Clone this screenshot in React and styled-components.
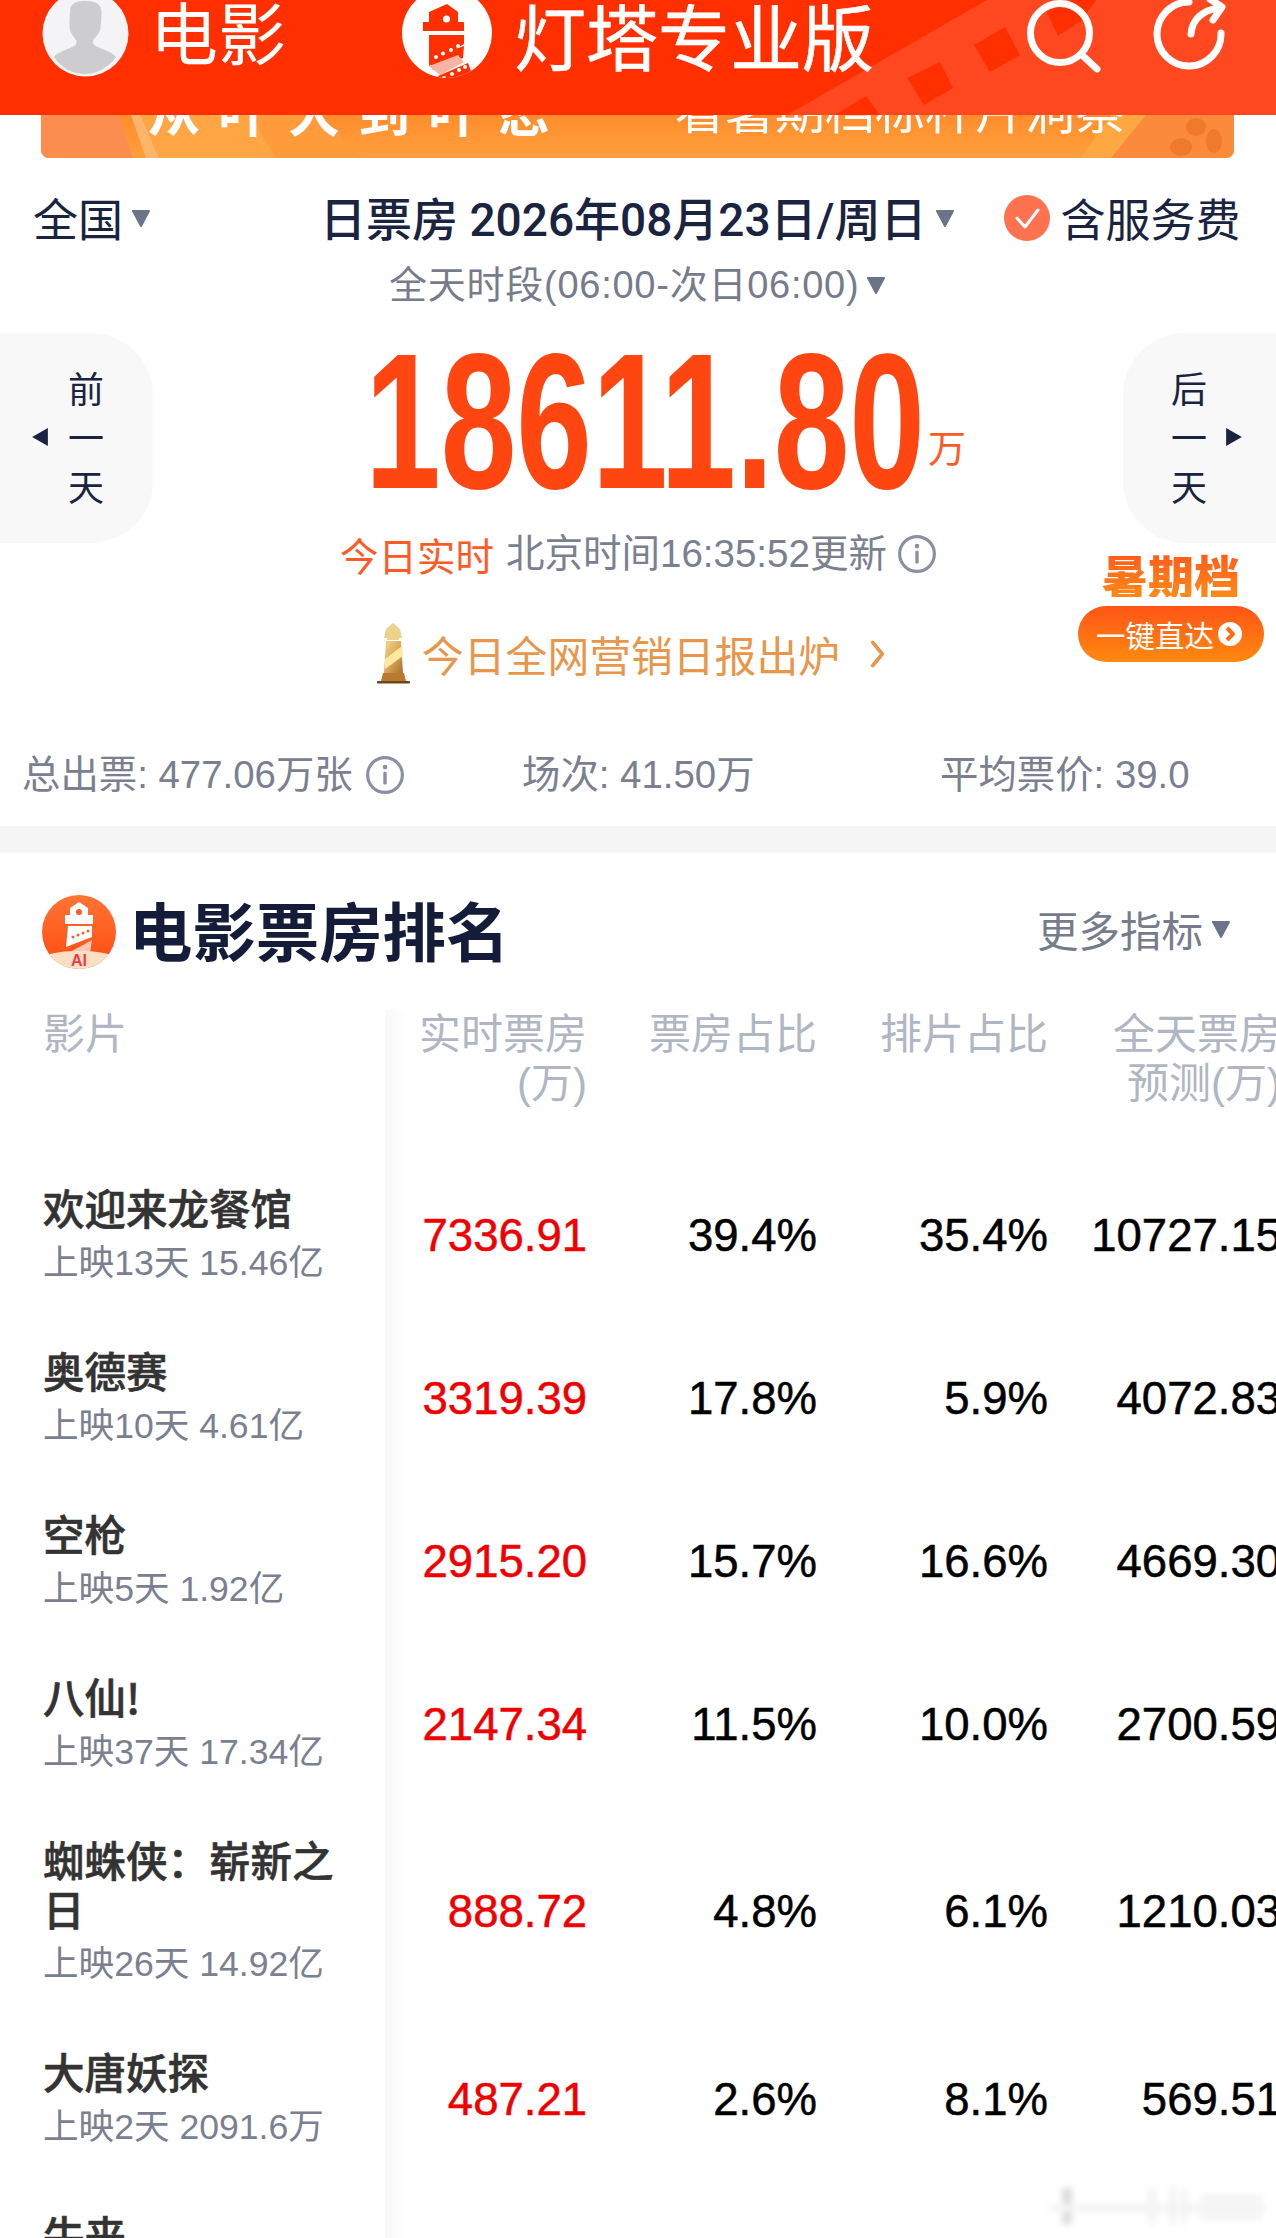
import React from "react";
import styled, { createGlobalStyle } from "styled-components";

const CJK = '"Noto Sans CJK SC"';
const Global = createGlobalStyle`
  html, body { margin: 0; padding: 0; background: #fff; }
  * { box-sizing: border-box; }
  body { font-family: "Liberation Sans", ${CJK}, sans-serif; }
`;

const Page = styled.div`
  position: relative; width: 1276px; height: 2238px; overflow: hidden; background: #fff;
`;

/* ---------- header ---------- */
const Header = styled.header`
  position: relative; height: 115px; padding: 0 0 49px 42px; display: flex; align-items: center;
  background: #ff2f00; overflow: hidden; color: #fff;
`;
const HeaderDecor = styled.svg`
  position: absolute; left: 0; top: 0; width: 1276px; height: 115px;
`;
const Avatar = styled.svg`
  position: relative; flex: none; width: 87px; height: 87px;
`;
const HeaderTitle = styled.div`
  position: relative; flex: none; margin: -4px 0 0 21px; width: 136px; font-family: ${CJK}; font-size: 68px; line-height: 66px; white-space: nowrap;
`;
const HeaderLogo = styled.svg`
  position: relative; flex: none; margin-left: 116px; width: 90px; height: 90px;
`;
const BrandTitle = styled.div`
  position: relative; flex: none; margin: 2px 0 0 22px; font-family: ${CJK}; font-size: 72px; line-height: 72px; white-space: nowrap;
  -webkit-text-stroke: .6px #fff;
`;
const HeaderIcon = styled.svg`
  position: relative; flex: none; margin: 8px 0 0 ${(p) => p.$ml}px; width: 80px; height: 80px;
`;

/* ---------- banner ---------- */
const Banner = styled.div`
  position: relative; margin: 0 42px 0 41px; height: 43px; overflow: hidden; border-radius: 0 0 8px 8px;
  background: linear-gradient(180deg, #ff8c2c 0%, #ffa03c 100%);
  display: flex;
`;
const BannerDecor = styled.svg`
  position: absolute; left: 0; top: 0; width: 1193px; height: 43px;
`;
const BannerLead = styled.div`
  position: relative; margin: -30px 0 0 107px; width: 527px; font-family: ${CJK}; font-weight: 700; font-size: 52px; line-height: 50px;
  letter-spacing: 18px; color: #fff; white-space: nowrap;
`;
const BannerNote = styled.div`
  position: relative; font-family: ${CJK}; font-size: 50px; line-height: 50px; margin-top: -33px; color: #fff; white-space: nowrap;
`;

/* ---------- filters ---------- */
const FilterRow = styled.div`
  height: 50px; margin-top: 35px; padding-left: 33px; display: flex; align-items: center;
  color: #1a2340; white-space: nowrap;
`;
const FilterLabel = styled.span`
  font-family: ${CJK}; font-size: 45px; line-height: 50px;
`;
const DateLabel = styled.span`
  margin: 3px 0 0 ${(p) => p.$ml}px; font-family: Roboto, ${CJK}, sans-serif; font-weight: 500; font-size: 46px; line-height: 50px;
`;
const Caret = styled.svg`
  flex: none; width: 20px; height: 18px; margin-left: ${(p) => p.$ml ?? 8}px;
`;
const CheckMark = styled.svg`
  flex: none; width: 46px; height: 46px; margin-left: 49px;
`;
const ServiceLabel = styled(FilterLabel)`
  margin-left: 11px;
`;
const TimeRow = styled.div`
  height: 44px; margin-top: 20px; padding-left: 389px; display: flex; align-items: center; color: #767c8b;
  font-size: 38px; line-height: 44px; white-space: nowrap; letter-spacing: .75px;
`;

/* ---------- hero ---------- */
const Hero = styled.section`
  height: 210px; margin-top: 26px; display: flex; justify-content: space-between;
`;
const DayButton = styled.div`
  flex: none; width: 153px; background: #f8f8f9; display: flex; align-items: center; gap: ${(p) => p.$left ? "19px" : "18px"};
  padding-left: ${(p) => p.$left ? "31px" : "48px"}; padding-bottom: 3px;
  border-radius: ${(p) => p.$left ? "0 62px 62px 0" : "62px 0 0 62px"}; color: #1a2340;
`;
const DayArrow = styled.svg`
  flex: none; width: 18px; height: 22px;
`;
const DayText = styled.div`
  width: 36px; font-family: ${CJK}; font-size: 36px; line-height: 49px; text-align: center;
`;
const HeroCenter = styled.div`
  flex: none; width: 970px; display: flex; align-items: flex-start; padding: 13px 0 0 212px;
`;
const BigNumberBox = styled.div`
  flex: none; width: 555px; height: 150px;
`;
const BigNumber = styled.span`
  display: inline-block; transform: scaleX(.705); transform-origin: left top;
  font-size: 193px; line-height: 150px; font-weight: 700; color: #ff4510; white-space: nowrap;
`;
const Unit = styled.span`
  margin: 78px 0 0 8px; font-family: ${CJK}; font-size: 38px; line-height: 44px; color: #ff5a26;
`;

/* ---------- realtime ---------- */
const LiveRow = styled.div`
  height: 44px; margin-top: -11px; padding-left: 340px; display: flex; align-items: center;
  font-size: 38.5px; line-height: 44px; white-space: nowrap;
`;
const LiveTag = styled.span` color: #ff5a26; font-family: ${CJK}; `;
const LiveTime = styled.span` margin-left: 12px; color: #7b8090; `;
const InfoIcon = styled.svg`
  flex: none; width: 40px; height: 40px; margin-left: ${(p) => p.$ml}px;
`;
const MarketRow = styled.div`
  height: 62px; margin-top: 47px; padding-left: 375px; display: flex; align-items: center; white-space: nowrap;
`;
const Trophy = styled.svg`
  flex: none; width: 36px; height: 62px;
`;
const MarketText = styled.span`
  margin-left: 11px; font-family: ${CJK}; font-size: 41.8px; line-height: 50px; color: #e8964a;
`;
const MarketChevron = styled.svg`
  flex: none; width: 20px; height: 36px; margin-left: 28px;
`;
const Season = styled.div`
  position: absolute; left: 1078px; top: 552px; width: 186px; display: flex; flex-direction: column; align-items: center; gap: 9px;
`;
const SeasonTitle = styled.div`
  width: 140px; font-family: ${CJK}; font-weight: 900; font-size: 46px; line-height: 45px; white-space: nowrap; text-align: center;
  background: linear-gradient(180deg, #ff5a1c, #ff8a18); -webkit-background-clip: text; background-clip: text; color: transparent;
`;
const SeasonButton = styled.div`
  width: 186px; height: 56px; border-radius: 28px; display: flex; align-items: center; padding-left: 18px; gap: 4px;
  background: linear-gradient(180deg, #ff5416, #ff8a10); color: #fff;
  font-family: ${CJK}; font-size: 29.5px; line-height: 56px; white-space: nowrap;
`;
const SeasonGo = styled.svg`
  flex: none; width: 24px; height: 24px;
`;

/* ---------- stats ---------- */
const Stats = styled.div`
  height: 44px; margin-top: 68px; padding-left: 22px; display: grid; grid-template-columns: 500px 418px 1fr; align-items: center;
  color: #7b8090; font-size: 38.4px; line-height: 44px; white-space: nowrap;
`;
const Stat = styled.div` display: flex; align-items: center; `;
const Band = styled.div` height: 27px; margin-top: 29px; background: #f5f5f6; `;

/* ---------- section ---------- */
const SectionHead = styled.div`
  height: 73px; margin-top: 42px; padding-left: 42px; display: flex; align-items: center; white-space: nowrap;
`;
const SectionLogo = styled.svg` flex: none; width: 74px; height: 74px; `;
const SectionTitle = styled.h2`
  margin: 0 0 6px 13px; width: 908px; font-family: ${CJK}; font-weight: 700; font-size: 63.4px; line-height: 73px; color: #141c3a;
`;
const MoreGroup = styled.div`
  display: flex; align-items: center; margin-bottom: 6px;
`;
const MoreLink = styled.span`
  font-family: ${CJK}; font-size: 41.5px; line-height: 50px; color: #767c8b;
`;

const Table = styled.div`
  position: relative; margin-top: 42px; width: 1276px;
  &::after {
    content: ""; position: absolute; left: 385px; top: 0; bottom: 0; width: 22px;
    background: linear-gradient(90deg, #f8f8f8, #ffffff);
  }
`;
const Columns = `display: grid; grid-template-columns: 385px 202px 230px 231px 233px; width: 1281px;`;
const HeadRow = styled.div`
  ${Columns} height: 144px; color: #b0b6c2; font-size: 42px; line-height: 49px;
`;
const HeadCell = styled.div`
  text-align: ${(p) => p.$left ? "left" : "right"}; padding-left: ${(p) => p.$left ? "43px" : "0"}; white-space: nowrap;
`;
const Row = styled.div`
  ${Columns} align-items: center; padding: 29px 0;
`;
const MovieCell = styled.div` padding: 0 40px 0 43px; `;
const MovieName = styled.div`
  font-family: ${CJK}; font-weight: 500; font-size: 41.5px; line-height: 49px; color: #333; -webkit-text-stroke: .6px #333;
`;
const MovieSub = styled.div`
  margin-top: 7px; color: #7b8090; font-size: 35.6px; line-height: 49px; white-space: nowrap;
`;
const NumCell = styled.div`
  text-align: right; font-size: 45.5px; line-height: 50px; color: ${(p) => p.$red ? "#f00000" : "#000"}; white-space: nowrap;
  -webkit-text-stroke: .5px ${(p) => p.$red ? "#f00000" : "#000"};
`;
const Watermark = styled.svg`
  position: absolute; left: 1030px; top: 2160px; width: 246px; height: 78px;
`;

const rows = [
  ["欢迎来龙餐馆", "上映13天 15.46亿", "7336.91", "39.4%", "35.4%", "10727.15"],
  ["奥德赛", "上映10天 4.61亿", "3319.39", "17.8%", "5.9%", "4072.83"],
  ["空枪", "上映5天 1.92亿", "2915.20", "15.7%", "16.6%", "4669.30"],
  ["八仙!", "上映37天 17.34亿", "2147.34", "11.5%", "10.0%", "2700.59"],
  ["蜘蛛侠：崭新之日", "上映26天 14.92亿", "888.72", "4.8%", "6.1%", "1210.03"],
  ["大唐妖探", "上映2天 2091.6万", "487.21", "2.6%", "8.1%", "569.51"],
  ["牛来", "上映1天 320.4万", "310.18", "1.7%", "4.2%", "402.66"],
];

const CaretIcon = ({ ml }) => (
  <Caret $ml={ml} viewBox="0 0 20 18"><path d="M2 2h16l-8 15z" fill="#6b7488" stroke="#6b7488" strokeWidth="2" strokeLinejoin="round" /></Caret>
);
const Info = ({ ml }) => (
  <InfoIcon $ml={ml} viewBox="0 0 38 38">
    <circle cx="19" cy="19" r="16.5" fill="none" stroke="#8a90a0" strokeWidth="3" />
    <circle cx="19" cy="11.5" r="2.2" fill="#8a90a0" />
    <rect x="17.4" y="16" width="3.2" height="12" rx="1" fill="#8a90a0" />
  </InfoIcon>
);

export default function App() {
  return (
    <Page>
      <Global />
      <Header>
        <HeaderDecor viewBox="0 0 1276 115">
          <polygon points="787,115 987,0 1276,0 1276,115" fill="#ff4820" />
          <g fill="#ff2f00">
            <polygon points="1005,27 1020,55 990,72 974,45" />
            <polygon points="940,62 953,88 924,105 907,78" />
            <polygon points="866,96 880,115 835,115" />
            <polygon points="1072,0 1096,0 1082,20 1058,36 1047,12" />
          </g>
        </HeaderDecor>
        <Avatar viewBox="0 0 87 87">
          <circle cx="43.5" cy="43.5" r="43" fill="#f4f4f6" />
          <path d="M28 20c1-8 8-9 16-9 10 0 16 3 15.500 13-.3 6-.2 10-1.500 16-1.500 5-6 8-7 11-.6 3 1 4.500 7 7 8 3 14 6 16 9-8 11-20 17-31 17-12 0-24-6-31-17 3-4 9-6 16-9 5-2 7-4 6.500-7-1-3-5-6-6.500-11-1-6-.6-14 .5-20z" fill="#cdcdcf" />
        </Avatar>
        <HeaderTitle>电影</HeaderTitle>
        <HeaderLogo viewBox="0 0 90 90">
          <defs><clipPath id="hl"><circle cx="45" cy="45" r="45" /></clipPath></defs>
          <circle cx="45" cy="45" r="45" fill="#fff" />
          <g clipPath="url(#hl)">
            <path d="M45 16l11 8v10h6v9H21v-9h6V24z" fill="#ff2f00" />
            <circle cx="44.500" cy="31" r="3.500" fill="#fff" />
            <path d="M27 47h35v9L27 78z" fill="#ff2f00" />
            <path d="M27 70l35-12-1 12-30 12z" fill="#ff2f00" />
            <g fill="#fff"><circle cx="34" cy="69" r="2" /><circle cx="41" cy="65.500" r="2" /><circle cx="49" cy="62" r="2" /><circle cx="56" cy="58" r="2" /></g>
            <path d="M27 78l29-11 6 7-24 13z" fill="#f9b3a2" />
            <path d="M36 88l30-13 3 8-27 17z" fill="#ff2f00" />
            <g fill="#fff"><circle cx="42" cy="90" r="2" /><circle cx="50" cy="86" r="2" /><circle cx="57" cy="82" r="2" /><circle cx="63" cy="79" r="2" /></g>
          </g>
        </HeaderLogo>
        <BrandTitle>灯塔专业版</BrandTitle>
        <HeaderIcon $ml={149} viewBox="0 0 80 80" fill="none" stroke="#fff" strokeWidth="7" strokeLinecap="round">
          <circle cx="37" cy="36" r="29.500" />
          <path d="M59 58l15 14" />
        </HeaderIcon>
        <HeaderIcon $ml={46} viewBox="0 0 80 80" fill="none" stroke="#fff" strokeWidth="7" strokeLinecap="round" strokeLinejoin="round">
          <path d="M40 5A32 32 0 1 0 72 36" />
          <path d="M42 37c1-14 11-24 28-26" />
          <path d="M61 2l12 8-9 13" />
        </HeaderIcon>
      </Header>

      <Banner>
        <BannerDecor viewBox="0 0 1193 43">
          <polygon points="0,0 78,0 92,43 0,43" fill="#fb8d4f" />
          <polygon points="90,0 100,0 118,43 105,43" fill="#ffb56a" />
          <polygon points="100,0 210,0 235,43 118,43" fill="#ffa544" />
          <polygon points="210,0 280,0 320,43 235,43" fill="#ff9b3a" />
          <polygon points="1040,43 1070,0 1193,0 1193,43" fill="#ffa842" />
          <polygon points="1070,43 1105,0 1193,0 1193,43" fill="#fb8a3c" />
          <ellipse cx="1155" cy="12" rx="10" ry="9" fill="#f07a2c" />
          <ellipse cx="1140" cy="32" rx="11" ry="9" fill="#f07a2c" />
          <ellipse cx="1173" cy="26" rx="8" ry="12" fill="#f07a2c" />
        </BannerDecor>
        <BannerLead>从叶大到叶恕</BannerLead>
        <BannerNote>看暑期档标杆片洞察</BannerNote>
      </Banner>

      <FilterRow>
        <FilterLabel>全国</FilterLabel>
        <CaretIcon ml={8} />
        <DateLabel $ml={169}>日票房 2026年08月23日/周日</DateLabel>
        <CaretIcon ml={8} />
        <CheckMark viewBox="0 0 46 46">
          <circle cx="23" cy="23" r="23" fill="#ff7250" />
          <path d="M13 23l8 9 13-17" fill="none" stroke="#fff" strokeWidth="3" strokeLinecap="round" strokeLinejoin="round" />
        </CheckMark>
        <ServiceLabel>含服务费</ServiceLabel>
      </FilterRow>
      <TimeRow>
        全天时段(06:00-次日06:00)
        <CaretIcon ml={7} />
      </TimeRow>

      <Hero>
        <DayButton $left>
          <DayArrow viewBox="0 0 16 18"><path d="M15 1v16L1 9z" fill="#1a2340" /></DayArrow>
          <DayText>前<br />一<br />天</DayText>
        </DayButton>
        <HeroCenter>
          <BigNumberBox><BigNumber>18611.80</BigNumber></BigNumberBox>
          <Unit>万</Unit>
        </HeroCenter>
        <DayButton>
          <DayText>后<br />一<br />天</DayText>
          <DayArrow viewBox="0 0 16 18"><path d="M1 1v16l14-8z" fill="#1a2340" /></DayArrow>
        </DayButton>
      </Hero>

      <LiveRow>
        <LiveTag>今日实时</LiveTag>
        <LiveTime>北京时间16:35:52更新</LiveTime>
        <Info ml={10} />
      </LiveRow>
      <MarketRow>
        <Trophy viewBox="0 0 36 62">
          <defs>
            <linearGradient id="tg" x1="0" y1="0" x2="1" y2="1">
              <stop offset="0" stopColor="#f3d98c" /><stop offset=".5" stopColor="#d9a95a" /><stop offset="1" stopColor="#a8702a" />
            </linearGradient>
          </defs>
          <path d="M18 0l7 6 2 9h-3v2H12v-2H9l2-9z" fill="#ecd28a" />
          <path d="M11 18h15l2 32H9z" fill="url(#tg)" />
          <path d="M10 36l17-13 1 10-18 13z" fill="#fbe9a0" />
          <path d="M8 50h21l2 8H6z" fill="#b97a30" />
          <rect x="2" y="58" width="33" height="2.500" rx="1" fill="#6f4515" />
        </Trophy>
        <MarketText>今日全网营销日报出炉</MarketText>
        <MarketChevron viewBox="0 0 18 34" fill="none" stroke="#e8964a" strokeWidth="3.500" strokeLinecap="round" strokeLinejoin="round">
          <path d="M4 6l9 11-9 11" />
        </MarketChevron>
      </MarketRow>
      <Season>
        <SeasonTitle>暑期档</SeasonTitle>
        <SeasonButton>
          一键直达
          <SeasonGo viewBox="0 0 24 24">
            <circle cx="12" cy="12" r="12" fill="#fff" />
            <path d="M9 6l6 6-6 6" fill="none" stroke="#ff6a12" strokeWidth="4" strokeLinejoin="round" />
          </SeasonGo>
        </SeasonButton>
      </Season>

      <Stats>
        <Stat>总出票: 477.06万张<Info ml={12} /></Stat>
        <Stat>场次: 41.50万</Stat>
        <Stat>平均票价: 39.0</Stat>
      </Stats>
      <Band />

      <SectionHead>
        <SectionLogo viewBox="0 0 74 74">
          <defs>
            <linearGradient id="sg" x1="0" y1="0" x2="0" y2="1">
              <stop offset="0" stopColor="#ff7434" /><stop offset="1" stopColor="#ff4a10" />
            </linearGradient>
            <clipPath id="sc"><circle cx="37" cy="37" r="37" /></clipPath>
          </defs>
          <circle cx="37" cy="37" r="37" fill="url(#sg)" />
          <g clipPath="url(#sc)">
            <path d="M37 7l9 6v7h5v9H23v-9h5v-7z" fill="#fff" />
            <circle cx="37" cy="17" r="3" fill="#ff5a20" />
            <path d="M26 31h24v11L24 52z" fill="#fff" />
            <g fill="#ff5a20"><circle cx="31" cy="42" r="1.500" /><circle cx="36" cy="40" r="1.500" /><circle cx="41" cy="38" r="1.500" /><circle cx="46" cy="36" r="1.500" /></g>
            <path d="M30 56l20-11-2 13z" fill="#fbc8b0" />
            <path d="M0 62c10-5 24-6 37-6s27 1 37 6v12H0z" fill="#fde0c4" />
            <text x="37" y="71" textAnchor="middle" fontFamily="Liberation Sans" fontWeight="700" fontSize="16" fill="#f03a48">AI</text>
          </g>
        </SectionLogo>
        <SectionTitle>电影票房排名</SectionTitle>
        <MoreGroup>
          <MoreLink>更多指标</MoreLink>
          <CaretIcon ml={8} />
        </MoreGroup>
      </SectionHead>

      <Table>
        <HeadRow>
          <HeadCell $left>影片</HeadCell>
          <HeadCell>实时票房<br />(万)</HeadCell>
          <HeadCell>票房占比</HeadCell>
          <HeadCell>排片占比</HeadCell>
          <HeadCell>全天票房<br />预测(万)</HeadCell>
        </HeadRow>
        {rows.map((r) => (
          <Row key={r[0]}>
            <MovieCell>
              <MovieName>{r[0]}</MovieName>
              <MovieSub>{r[1]}</MovieSub>
            </MovieCell>
            <NumCell $red>{r[2]}</NumCell>
            <NumCell>{r[3]}</NumCell>
            <NumCell>{r[4]}</NumCell>
            <NumCell>{r[5]}</NumCell>
          </Row>
        ))}
      </Table>

      <Watermark viewBox="0 0 246 78">
        <defs><filter id="wb"><feGaussianBlur stdDeviation="3" /></filter></defs>
        <g filter="url(#wb)">
          <rect x="32" y="28" width="10" height="36" fill="#dcdcdc" />
          <rect x="20" y="44" width="215" height="8" fill="#f4f4f4" />
          <rect x="118" y="28" width="8" height="36" fill="#f4f4f4" />
          <rect x="140" y="26" width="5" height="38" fill="#f0f0f0" />
          <rect x="152" y="28" width="5" height="36" fill="#f2f2f2" />
          <rect x="170" y="34" width="62" height="26" fill="#f5f5f5" />
        </g>
      </Watermark>
    </Page>
  );
}
